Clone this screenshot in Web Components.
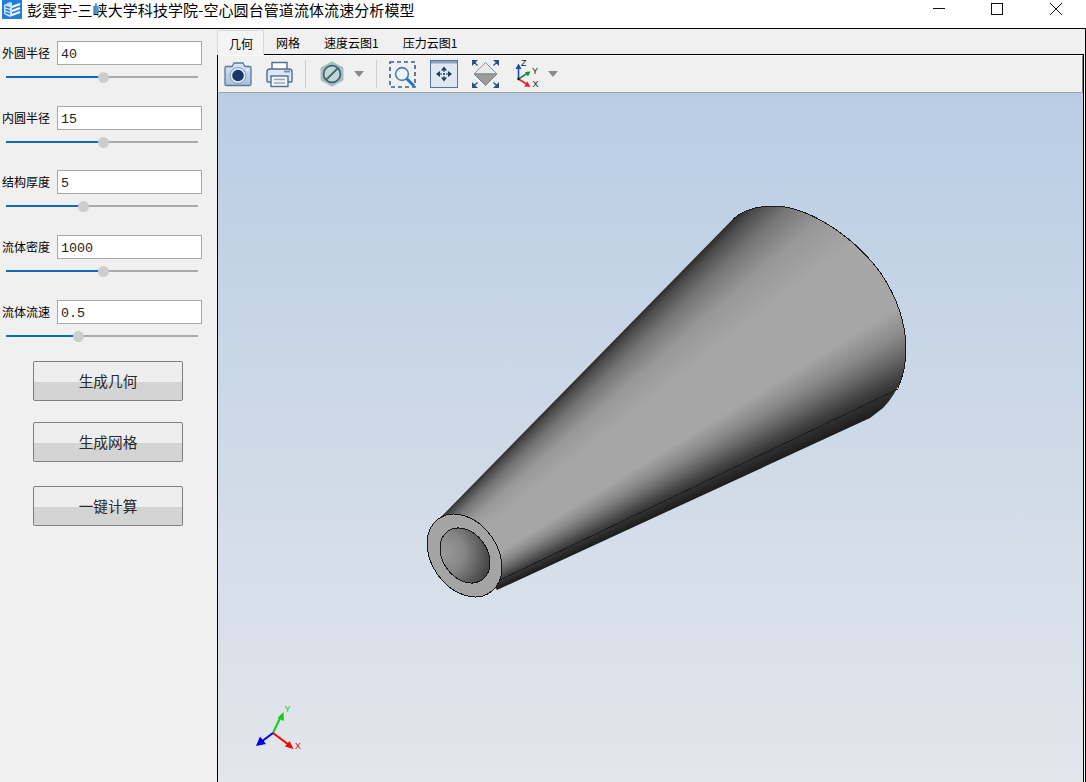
<!DOCTYPE html>
<html lang="zh">
<head>
<meta charset="utf-8">
<title>空心圆台管道流体流速分析模型</title>
<style>
    html, body { margin: 0; height: 100%; overflow: hidden; background: #fff; }
    body { font-family: "Noto Sans CJK SC", "Liberation Sans", sans-serif; color: #000; }
</style>
</head>
<body>
<app-window>
    <title-bar slot="title">彭霆宇-三峡大学科技学院-空心圆台管道流体流速分析模型</title-bar>
    <side-panel slot="side">
        <param-row thumb="97"><span slot="label">外圆半径</span><span slot="value">40</span></param-row>
        <param-row thumb="97" style="margin-bottom:10px"><span slot="label">内圆半径</span><span slot="value">15</span></param-row>
        <param-row thumb="77"><span slot="label">结构厚度</span><span slot="value">5</span></param-row>
        <param-row thumb="97"><span slot="label">流体密度</span><span slot="value">1000</span></param-row>
        <param-row thumb="72" style="margin-bottom:7px"><span slot="label">流体流速</span><span slot="value">0.5</span></param-row>
        <action-button style="margin-bottom:21px">生成几何</action-button>
        <action-button style="margin-bottom:24px">生成网格</action-button>
        <action-button>一键计算</action-button>
    </side-panel>
    <tab-pane slot="main">
        <tab-item slot="tabs" active>几何</tab-item>
        <tab-item slot="tabs">网格</tab-item>
        <tab-item slot="tabs">速度云图1</tab-item>
        <tab-item slot="tabs">压力云图1</tab-item>
        <view-toolbar></view-toolbar>
        <model-view></model-view>
    </tab-pane>
</app-window>

<script>
class AppWindow extends HTMLElement {
    constructor() {
        super();
        this.attachShadow({ mode: 'open' });
        this.shadowRoot.innerHTML = `
            <style>
                :host { display: flex; flex-direction: column; width: 1086px; height: 782px; overflow: hidden; }
                .body { flex: 1; min-height: 0; display: flex; background: #fff; border-top: 1px solid #000; border-right: 1px solid #000; }
            </style>
            <slot name="title"></slot>
            <div class="body">
                <slot name="side"></slot>
                <slot name="main"></slot>
            </div>
        `;
    }
}

class TitleBar extends HTMLElement {
    constructor() {
        super();
        this.attachShadow({ mode: 'open' });
        this.shadowRoot.innerHTML = `
            <style>
                :host { display: flex; height: 28px; flex: none; background: #fff; align-items: flex-start; position: relative; }
                .logo { margin: 0 5px 0 2px; flex: none; }
                .text { font-size: 15px; line-height: 19px; letter-spacing: 0.08px; white-space: nowrap; flex: 1; }
                .controls { display: flex; flex: none; width: 170px; height: 17px; }
                .controls svg { display: block; }
            </style>
            <svg class="logo" width="20" height="19" viewBox="0 0 20 19">
                <rect width="20" height="19" fill="#1f7fe0"/>
                <path d="M2 5 L8 2 L10 3 L10 16 L8 17 L2 14 Z" fill="#cfe4fa"/>
                <path d="M3.5 6.5 L8 8 M3.5 9.5 L8 11 M3.5 12.5 L8 14" stroke="#1f7fe0" stroke-width="1.4"/>
                <path d="M10 7 L18 4 M10 11 L18 8 M10 15 L18 12" stroke="#fff" stroke-width="2"/>
            </svg>
            <span class="text"><slot></slot></span>
            <div class="controls">
                <svg width="170" height="17" viewBox="0 0 170 17" fill="none" stroke="#111" stroke-width="1" shape-rendering="crispEdges">
                    <path d="M17 8.5 H29"/>
                    <rect x="75.5" y="3.5" width="11" height="11"/>
                    <path d="M134 3 L146 15 M146 3 L134 15" shape-rendering="auto"/>
                </svg>
            </div>
        `;
    }
}

class SidePanel extends HTMLElement {
    constructor() {
        super();
        this.attachShadow({ mode: 'open' });
        this.shadowRoot.innerHTML = `
            <style>
                :host { display: block; flex: none; width: 217px; background: #f0f0f0; padding-top: 12px; box-sizing: border-box; }
            </style>
            <slot></slot>
        `;
    }
}

class ParamRow extends HTMLElement {
    constructor() {
        super();
        this.attachShadow({ mode: 'open' });
        this.shadowRoot.innerHTML = `
            <style>
                :host { display: block; height: 54px; margin-bottom: 11px; }
                .top { display: flex; align-items: center; height: 24px; padding-left: 2px; }
                .label { width: 55px; font-size: 12px; line-height: 16px; flex: none; white-space: nowrap; }
                .field { width: 145px; height: 24px; box-sizing: border-box; flex: none; background: #fff; border: 1px solid #a8a8a8; color: #222;
                         font: 13.33px/20px "Liberation Mono", monospace; padding: 3px 0 0 3px; }
                value-slider { margin: 6px 0 0 6px; }
            </style>
            <div class="top">
                <div class="label"><slot name="label"></slot></div>
                <div class="field"><slot name="value"></slot></div>
            </div>
            <value-slider></value-slider>
        `;
    }

    connectedCallback() {
        this.shadowRoot.querySelector('value-slider').setAttribute('thumb', this.getAttribute('thumb'));
    }
}

class ValueSlider extends HTMLElement {
    static get observedAttributes() { return ['thumb']; }

    constructor() {
        super();
        this.attachShadow({ mode: 'open' });
        this.shadowRoot.innerHTML = `
            <style>
                :host { display: flex; align-items: center; width: 192px; height: 12px; position: relative; }
                .done { height: 2px; background: #0f6cbd; flex: none; }
                .rest { height: 2px; background: #aaa; flex: 1; }
                .thumb { position: absolute; top: 1px; width: 11px; height: 11px; border-radius: 50%; background: #cdcdcd; }
            </style>
            <div class="done"></div><div class="rest"></div><div class="thumb"></div>
        `;
    }

    attributeChangedCallback(name, oldValue, value) {
        this.shadowRoot.querySelector('.done').style.width = `${value}px`;
        this.shadowRoot.querySelector('.thumb').style.left = `${value - 5.5}px`;
    }
}

class ActionButton extends HTMLElement {
    constructor() {
        super();
        this.attachShadow({ mode: 'open' });
        this.shadowRoot.innerHTML = `
            <style>
                :host { display: flex; align-items: center; justify-content: center; box-sizing: border-box; width: 150px; height: 40px; margin-left: 33px;
                        padding-bottom: 2px; border: 1px solid #808080; border-radius: 2px; background: linear-gradient(#eeeeee 52%, #d4d4d4 52%);
                        font-size: 14.67px; color: #2a2a2a; }
            </style>
            <slot></slot>
        `;
    }
}

class TabPane extends HTMLElement {
    constructor() {
        super();
        this.attachShadow({ mode: 'open' });
        this.shadowRoot.innerHTML = `
            <style>
                :host { display: flex; flex-direction: column; flex: 1; min-width: 0; background: #f0f0f0; }
                .tabs { display: flex; height: 26px; flex: none; padding-top: 1px; margin-right: 1px; box-sizing: border-box; }
                .filler { flex: 1; border-bottom: 1px solid #000; }
                .page { flex: 1; min-height: 0; display: flex; flex-direction: column; margin-right: 1px;
                        border-left: 1px solid #000; border-right: 1px solid #000; }
                .wrap { flex: 1; min-height: 0; display: flex; background: #fff; }
            </style>
            <div class="tabs"><slot name="tabs"></slot><div class="filler"></div></div>
            <div class="wrap">
                <div class="page"><slot></slot></div>
            </div>
        `;
    }
}

class TabItem extends HTMLElement {
    constructor() {
        super();
        this.attachShadow({ mode: 'open' });
        this.shadowRoot.innerHTML = `
            <style>
                :host { display: flex; align-items: center; padding: 0 12px; font-size: 12px; white-space: nowrap; box-sizing: border-box;
                        border-bottom: 1px solid #000; }
                :host([active]) { background: #f4f4f4; border: 1px solid #d8d8d8; border-bottom: 0; padding: 0 10px 0 11px; }
            </style>
            <slot></slot>
        `;
    }
}

const TOOL_ICONS = {
    camera: `<svg width="28" height="25" viewBox="0 0 28 25">
        <defs><linearGradient id="cb" x1="0" y1="0" x2="0" y2="1"><stop offset="0" stop-color="#dbe7f4"/><stop offset="1" stop-color="#a9c0d9"/></linearGradient></defs>
        <path d="M1 6 Q1 4.5 2.5 4.5 H8 L10 1 H19 L21 4.5 H25.5 Q27 4.5 27 6 V22 Q27 23.5 25.5 23.5 H2.5 Q1 23.5 1 22 Z" fill="url(#cb)" stroke="#56789e" stroke-width="1.3"/>
        <circle cx="14" cy="13.5" r="8" fill="#dfe9f3" stroke="#7f9abb"/>
        <circle cx="14" cy="13.5" r="5.8" fill="#1c3669"/>
        <circle cx="23.5" cy="8" r="1" fill="#fff"/>
    </svg>`,
    printer: `<svg width="27" height="27" viewBox="0 0 27 27" fill="none" stroke="#4f6f92" stroke-width="1.4">
        <path d="M6 9 V1.5 H21 V9" fill="#fff"/>
        <path d="M1 11 Q1 8 4 8 H23 Q26 8 26 11 V20 Q26 21 25 21 H2 Q1 21 1 20 Z" fill="#dfe8f2"/>
        <rect x="5" y="15" width="17" height="10.5" fill="#f4f7fa"/>
        <path d="M8 18.5 H19 M8 22 H19" stroke="#8ea7c0" stroke-width="1.6"/>
        <path d="M18 10.5 H24" stroke="#7b8fa5" stroke-width="2"/>
    </svg>`,
    section: `<svg width="24" height="26" viewBox="0 0 24 26">
        <path d="M12 0.8 L23 6.8 V19.2 L12 25.2 L1 19.2 V6.8 Z" fill="#a4bcbe" stroke="#b0c2c3"/>
        <circle cx="12" cy="13" r="8.4" fill="#c4d5d7" stroke="#3c666d" stroke-width="1.7"/>
        <path d="M6.6 18.4 L17.4 7.6" stroke="#3c666d" stroke-width="2"/>
    </svg>`,
    zoombox: `<svg width="27" height="27" viewBox="0 0 27 27" fill="none">
        <rect x="1" y="1" width="25" height="25" stroke="#3d5c8a" stroke-width="1.6" stroke-dasharray="4 3"/>
        <circle cx="13" cy="13" r="6.4" stroke="#4f7db0" stroke-width="1.6" fill="#eef4fa"/>
        <path d="M17.5 17.5 L25 25" stroke="#1a78c0" stroke-width="3"/>
    </svg>`,
    fit: `<svg width="28" height="28" viewBox="0 0 28 28">
        <rect x="0.5" y="0.5" width="27" height="27" fill="#dfe7f0" stroke="#55749a"/>
        <rect x="1" y="1" width="26" height="2.5" fill="#8ca3bd"/>
        <g fill="#1e3b62">
            <path d="M14 6.5 L17 10.5 H11 Z"/><path d="M14 21.5 L17 17.5 H11 Z"/>
            <path d="M6 14 L10 11 V17 Z"/><path d="M22 14 L18 11 V17 Z"/>
        </g>
        <path d="M14 10 V18 M10 14 H18" stroke="#1e3b62" stroke-width="1" stroke-dasharray="2 1"/>
    </svg>`,
    diamond: `<svg width="27" height="28" viewBox="0 0 27 28">
        <path d="M13.5 2.5 L25 14 H2 Z" fill="#e9e9e9" stroke="#8595a8"/>
        <path d="M2 14 H25 L13.5 25.5 Z" fill="#9c9c9c" stroke="#75838f"/>
        <g fill="#2d5080" stroke="#2d5080" stroke-width="1.4">
            <path d="M0.5 0.5 H4.5 L0.5 4.5 Z M1.5 1.5 L5.5 5.5"/>
            <path d="M26.5 0.5 H22.5 L26.5 4.5 Z M25.5 1.5 L21.5 5.5"/>
            <path d="M0.5 27.5 H4.5 L0.5 23.5 Z M1.5 26.5 L5.5 22.5"/>
            <path d="M26.5 27.5 H22.5 L26.5 23.5 Z M25.5 26.5 L21.5 22.5"/>
        </g>
    </svg>`,
    axes: `<svg width="27" height="34" viewBox="0 -3 27 34">
        <path d="M4.5 19 V7" stroke="#1b46b4" stroke-width="1.6"/>
        <path d="M4.5 3.5 L7.5 9 H1.5 Z" fill="#1b46b4"/>
        <path d="M4.5 19 L13 13.5" stroke="#12904a" stroke-width="1.6"/>
        <path d="M16.5 11.5 L14 16.5 L11 12 Z" fill="#12904a"/>
        <path d="M4.5 19 L12.5 24" stroke="#e0242c" stroke-width="1.6"/>
        <path d="M16.5 27 L10.2 26.5 L13.2 21.3 Z" fill="#e0242c"/>
        <circle cx="4.5" cy="19" r="1.2" fill="#111"/>
        <g font-family="Liberation Sans, sans-serif" font-size="9" fill="#222">
            <text x="7" y="6">Z</text><text x="18" y="14">Y</text><text x="18.5" y="27">X</text>
        </g>
    </svg>`,
    arrow: `<svg width="10" height="6" viewBox="0 0 10 6"><path d="M0 0 H10 L5 6 Z" fill="#8a8a8a"/></svg>`
};

class ToolIcon extends HTMLElement {
    constructor() {
        super();
        this.attachShadow({ mode: 'open' });
    }

    connectedCallback() {
        this.shadowRoot.innerHTML = `
            <style>
                :host { display: flex; flex: none; }
                svg { display: block; }
            </style>
            ${TOOL_ICONS[this.getAttribute('name')]}
        `;
    }
}

class ViewToolbar extends HTMLElement {
    constructor() {
        super();
        this.attachShadow({ mode: 'open' });
        this.shadowRoot.innerHTML = `
            <style>
                :host { display: flex; align-items: center; height: 38px; flex: none; box-sizing: border-box; padding: 0 0 0 6px;
                        background: #f0f0f0; border-bottom: 1px solid #a0a0a0; border-right: 1px solid #808080; border-top: 1px solid #fafafa; }
                .sep { width: 1px; height: 28px; background: #cfcfcf; flex: none; }
            </style>
            <tool-icon name="camera"></tool-icon>
            <tool-icon name="printer" style="margin-left:14px"></tool-icon>
            <div class="sep" style="margin-left:12px"></div>
            <tool-icon name="section" style="margin-left:14px"></tool-icon>
            <tool-icon name="arrow" style="margin-left:10px"></tool-icon>
            <div class="sep" style="margin-left:12px"></div>
            <tool-icon name="zoombox" style="margin-left:12px"></tool-icon>
            <tool-icon name="fit" style="margin-left:14px"></tool-icon>
            <tool-icon name="diamond" style="margin-left:14px"></tool-icon>
            <tool-icon name="axes" style="margin-left:15px"></tool-icon>
            <tool-icon name="arrow" style="margin-left:7px"></tool-icon>
        `;
    }
}

class ModelView extends HTMLElement {
    constructor() {
        super();
        this.attachShadow({ mode: 'open' });
        // cone, overlay and triad all use window coordinates, so the layer is shifted back by the view's offset
        this.shadowRoot.innerHTML = `
            <style>
                :host { display: block; flex: 1; min-height: 0; position: relative; overflow: hidden;
                        background: linear-gradient(#b9cde4, #e3e6eb); }
                .layer { position: absolute; left: -218px; top: -93px; width: 1086px; height: 782px; }
                .cone { background: conic-gradient(from 44.4deg at 264px 697px,
                            #2a2a2a 0deg, #4c4c4c 0.8deg, #757575 2.5deg, #989898 5deg, #a6a6a6 8deg, #a6a6a6 14deg,
                            #888 16deg, #666 17.5deg, #444 18.8deg, #2e2e2e 19.8deg, #1e1e1e 20.8deg, #1e1e1e 360deg);
                        clip-path: path('M440 518 L733 219 C745 209 760 206 773 206 C805 206 850 232 880 272 C897 297 906 325 906 350 C906 370 900 390 883 408 L870 418 L497 590 Z'); }
                svg { display: block; }
                text { font-family: "Liberation Sans", sans-serif; font-size: 9px; }
            </style>
            <div class="layer cone"></div>
            <svg class="layer" viewBox="0 0 1086 782" fill="none">
                <defs>
                    <radialGradient id="bore" gradientUnits="userSpaceOnUse" cx="450" cy="572" r="48">
                        <stop offset="0" stop-color="#9a9a9a"/><stop offset="0.45" stop-color="#858585"/>
                        <stop offset="1" stop-color="#444"/>
                    </radialGradient>
                </defs>
                <g shape-rendering="crispEdges">
                    <path d="M733 219 C745 209 760 206 773 206 C805 206 850 232 880 272 C897 297 906 325 906 350 C906 362 903 376 898 388" stroke="#1c1c1c"/>
                    <path d="M500 580 L898 389" stroke="#1c1c1c"/>
                    <ellipse cx="464.5" cy="555.5" rx="45" ry="33" transform="rotate(55 464.5 555.5)" fill="#a4a4a4" stroke="#161616"/>
                    <ellipse cx="465" cy="555.5" rx="29.7" ry="22.3" transform="rotate(55 465 555.5)" fill="url(#bore)" stroke="#161616"/>
                </g>

                <path d="M273 733 L281 716" stroke="#0fd00f" stroke-width="2"/>
                <path d="M283.5 712 L284 721 L277.5 718 Z" fill="#0fd00f"/>
                <path d="M273 733 L289 745" stroke="#f00000" stroke-width="2"/>
                <path d="M293.5 749 L285 746.5 L289.5 741 Z" fill="#f00000"/>
                <path d="M273 733 L261 742" stroke="#0000e6" stroke-width="2"/>
                <path d="M256 746 L260 736.5 L266 744 Z" fill="#0000e6"/>
                <text x="284.5" y="712" fill="#0fd00f">Y</text>
                <text x="295" y="749" fill="#f00000">X</text>
            </svg>
        `;
    }
}

customElements.define('value-slider', ValueSlider);
customElements.define('param-row', ParamRow);
customElements.define('action-button', ActionButton);
customElements.define('side-panel', SidePanel);
customElements.define('title-bar', TitleBar);
customElements.define('tab-item', TabItem);
customElements.define('tool-icon', ToolIcon);
customElements.define('view-toolbar', ViewToolbar);
customElements.define('model-view', ModelView);
customElements.define('tab-pane', TabPane);
customElements.define('app-window', AppWindow);
</script>
</body>
</html>
